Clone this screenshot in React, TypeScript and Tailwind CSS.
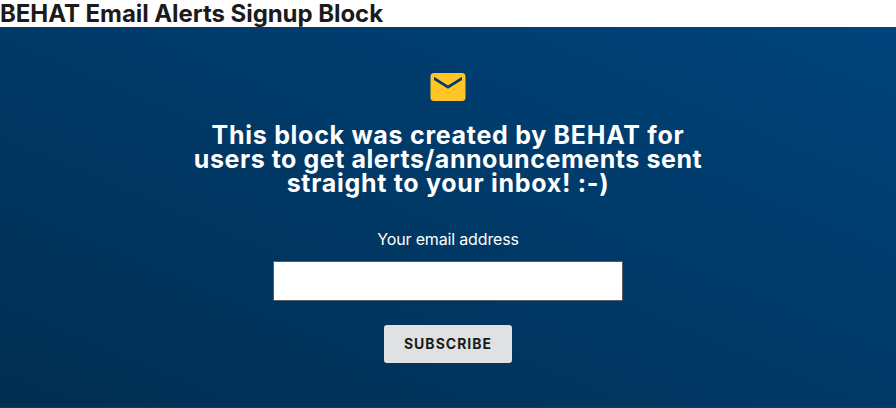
const lines = [
  { text: 'This block was created by BEHAT for', style: 'tracking-[0.72px]' },
  { text: 'users to get alerts/announcements sent', style: 'tracking-[0.55px]' },
  { text: 'straight to your inbox! :-)', style: 'tracking-[0.7px]' },
];

function EnvelopeIcon() {
  return (
    <svg viewBox="0 0 36 28" className="h-7 w-9" aria-hidden="true">
      <path
        fill="#ffc425"
        fillRule="evenodd"
        d="M4 0h28a3.5 3.5 0 0 1 3.5 3.5v21A3.5 3.5 0 0 1 32 28H4a3.5 3.5 0 0 1-3.5-3.5v-21A3.5 3.5 0 0 1 4 0ZM4 3.7V7l14 8.8L32 7V3.7l-14 8.8Z"
      />
    </svg>
  );
}

export default function App() {
  return (
    <main className="h-[408px] w-[896px] overflow-hidden bg-white font-['Inter',sans-serif] text-[#1b1b1b]">
      <h2 className="h-[27px] whitespace-nowrap text-[24px] leading-[27px] font-bold tracking-[-0.06px]">
        BEHAT Email Alerts Signup Block
      </h2>
      <section className="flex h-[381px] flex-col items-center border-b border-[#003e73] bg-linear-to-tr from-[#002e51] to-[#00447c] pt-[46px] text-white">
        <EnvelopeIcon />
        <h3 className="mt-[22px] flex flex-col items-center text-[25px] leading-6 font-bold whitespace-nowrap">
          {lines.map((line) => (
            <span key={line.text} className={line.style}>
              {line.text}
            </span>
          ))}
        </h3>
        <form className="mt-8 flex flex-col items-center" onSubmit={(e) => e.preventDefault()}>
          <label htmlFor="email" className="text-base leading-6 tracking-[-0.16px] whitespace-nowrap">
            Your email address
          </label>
          <input
            id="email"
            type="email"
            className="mt-[10px] h-10 w-[350px] border border-[#565c65] bg-white px-2 text-[#1b1b1b] outline-none"
          />
          <button
            type="submit"
            className="mt-6 h-[38px] w-32 rounded-[3px] bg-[#dfe1e2] text-[14px] leading-[14px] font-bold tracking-[1px] text-[#1b1b1b]"
          >
            SUBSCRIBE
          </button>
        </form>
      </section>
    </main>
  );
}
